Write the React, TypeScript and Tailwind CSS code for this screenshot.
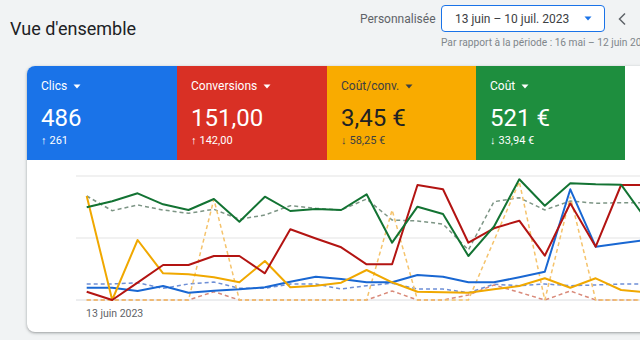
import React from "react";

const X = (i: number) => 59.7 + i * 25.45;
const pts = (arr: number[]) =>
  arr.map((y, i) => `${X(i).toFixed(1)},${(y - 160).toFixed(1)}`).join(" ");

const green = [207.3, 201.3, 193.3, 204.3, 210, 199, 221.7, 196.7, 211, 209, 210, 194.3, 242.7, 206.7, 214, 256, 226.7, 179.3, 205.7, 183.3, 184.3, 184.7, 220];
const greenDash = [196, 210.7, 205, 210, 213.3, 209.3, 219.3, 215, 205.7, 208.3, 210, 199, 220, 221, 224, 250, 201.7, 197.7, 210, 201, 203.3, 202.7, 202.7];
const red = [291.7, 300, 282.7, 265, 265, 256, 256, 273.3, 229.3, 238.5, 247.3, 264.3, 264.3, 185, 189.3, 242.7, 228.3, 220.7, 255.7, 203.3, 246.7, 185, 185];
const redDash = [300, 300, 300, 300, 300, 291.7, 300, 300, 300, 300, 300, 300, 291, 300, 300, 295, 285, 292.3, 300, 291, 300, 300, 300];
const blue = [287.7, 287.7, 291, 286, 292.7, 290.7, 289.3, 287.3, 281.7, 276.7, 279, 282.3, 282.3, 275, 276.7, 282.3, 282.3, 277.3, 271.7, 189.3, 246.7, 243.3, 240];
const blueDash = [284, 284, 282.7, 288.3, 284, 282, 288.3, 288.3, 284, 284, 289, 285.7, 283.3, 289, 289, 292.7, 284.3, 285.7, 284, 285.7, 285, 284, 284];
const yellow = [196, 300, 240, 273.3, 274.3, 277.3, 282.3, 261, 287.3, 285.7, 282.7, 270, 282.3, 291.7, 292.3, 292.7, 289.3, 286, 278.3, 287.7, 278.3, 290, 292.3];
const yellowDash = [300, 300, 300, 300, 300, 199.3, 300, 300, 300, 300, 300, 300, 210, 300, 300, 300, 240.8, 181.7, 300, 196.7, 300, 300, 300];

const Caret = ({ color }: { color: string }) => (
  <svg width="8" height="5" viewBox="0 0 8 5" className="ml-[6px]">
    <path d="M0.5 0.5 L7.5 0.5 L4 4.5 Z" fill={color} />
  </svg>
);

type TileProps = {
  bg: string;
  title: string;
  value: string;
  sub: string;
  up: boolean;
  dark?: boolean;
  first?: boolean;
  w: string;
};

const Tile = ({ bg, title, value, sub, up, dark, first, w }: TileProps) => (
  <div
    className={`${bg} ${w} shrink-0 h-[94px] pl-[14px] pt-[12px] flex flex-col ${first ? "rounded-tl-lg" : ""} ${dark ? "text-[#3c4043]" : "text-white"}`}
  >
    <div className="flex items-center h-[16px] text-[12px] leading-[16px]">
      <span>{title}</span>
      <Caret color={dark ? "#3c4043" : "#ffffff"} />
    </div>
    <div className={`mt-[10px] text-[24px] leading-[28px] ${dark ? "text-[#202124]" : ""}`}>{value}</div>
    <div className="mt-[2px] text-[11px] leading-[14px] flex items-center">
      <span className="text-[11px] mr-[3px]">{up ? "↑" : "↓"}</span>
      <span>{sub}</span>
    </div>
  </div>
);

export default function App() {
  return (
    <div
      className="w-[640px] h-[340px] bg-[#f1f3f4] overflow-hidden"
      style={{ fontFamily: "Roboto, 'Liberation Sans', sans-serif" }}
    >
      <div className="flex h-[66px]">
        <div className="w-[360px] shrink-0 pl-[10px] pt-[17px] text-[18px] leading-[24px] text-[#202124]">
          Vue d'ensemble
        </div>
        <div className="flex flex-col pt-[5px] shrink-0">
          <div className="flex items-center h-[27px]">
            <span className="w-[81px] text-[12px] text-[#5f6368]">Personnalisée</span>
            <div className="w-[164px] h-[27px] border border-[#1a73e8] rounded-[4px] bg-white flex items-center pl-[13px] pr-[12px]">
              <span className="text-[12px] text-[#3c4043] flex-1">13 juin – 10 juil. 2023</span>
              <svg width="8" height="5" viewBox="0 0 8 5">
                <path d="M0.5 0.5 L7.5 0.5 L4 4.5 Z" fill="#1a73e8" />
              </svg>
            </div>
            <svg width="10" height="14" viewBox="0 0 10 14" className="ml-[12px]">
              <path d="M8 1.5 L2.5 7 L8 12.5" fill="none" stroke="#5f6368" strokeWidth="1.5" />
            </svg>
          </div>
          <div className="pl-[81px] mt-[5px] text-[10.2px] leading-[12px] text-[#80868b] whitespace-nowrap">
            Par rapport à la période : 16 mai – 12 juin 2023
          </div>
        </div>
      </div>
      <div className="ml-[27px] w-[640px] h-[266px] bg-white rounded-lg shadow-[0_1px_2px_rgba(60,64,67,0.3),0_1px_3px_1px_rgba(60,64,67,0.15)]">
        <div className="flex">
          <Tile bg="bg-[#1a73e8]" w="w-[150px]" title="Clics" value="486" sub="261" up first />
          <Tile bg="bg-[#d93025]" w="w-[150px]" title="Conversions" value="151,00" sub="142,00" up />
          <Tile bg="bg-[#f9ab00]" w="w-[149px]" title="Coût/conv." value="3,45 €" sub="58,25 €" up={false} dark />
          <Tile bg="bg-[#1e8e3e]" w="w-[149px]" title="Coût" value="521 €" sub="33,94 €" up={false} />
        </div>
        <svg width="613" height="172" viewBox="0 0 613 172" className="block">
          <line x1="49" y1="16" x2="613" y2="16" stroke="#e3e3e3" strokeWidth="1" />
          <line x1="49" y1="78" x2="613" y2="78" stroke="#e3e3e3" strokeWidth="1" />
          <line x1="49" y1="140" x2="613" y2="140" stroke="#dadce0" strokeWidth="1" />
          <polyline points={pts(greenDash)} fill="none" stroke="#7d9585" strokeWidth="1.5" strokeDasharray="4 3" />
          <polyline points={pts(blueDash)} fill="none" stroke="#6e8fd6" strokeWidth="1.5" strokeDasharray="4 3" />
          <polyline points={pts(redDash)} fill="none" stroke="#d98a7a" strokeWidth="1.5" strokeDasharray="4 3" />
          <polyline points={pts(yellowDash)} fill="none" stroke="#f5c36b" strokeWidth="1.5" strokeDasharray="4 3" />
          <polyline points={pts(blue)} fill="none" stroke="#1967d2" strokeWidth="2" strokeLinejoin="round" />
          <polyline points={pts(yellow)} fill="none" stroke="#f0a800" strokeWidth="2" strokeLinejoin="round" />
          <polyline points={pts(red)} fill="none" stroke="#b31412" strokeWidth="2" strokeLinejoin="round" />
          <polyline points={pts(green)} fill="none" stroke="#137333" strokeWidth="2" strokeLinejoin="round" />
          <text x="59" y="156.5" fontSize="10.5" fill="#5f6368" fontFamily="Roboto, 'Liberation Sans', sans-serif">
            13 juin 2023
          </text>
        </svg>
      </div>
    </div>
  );
}
